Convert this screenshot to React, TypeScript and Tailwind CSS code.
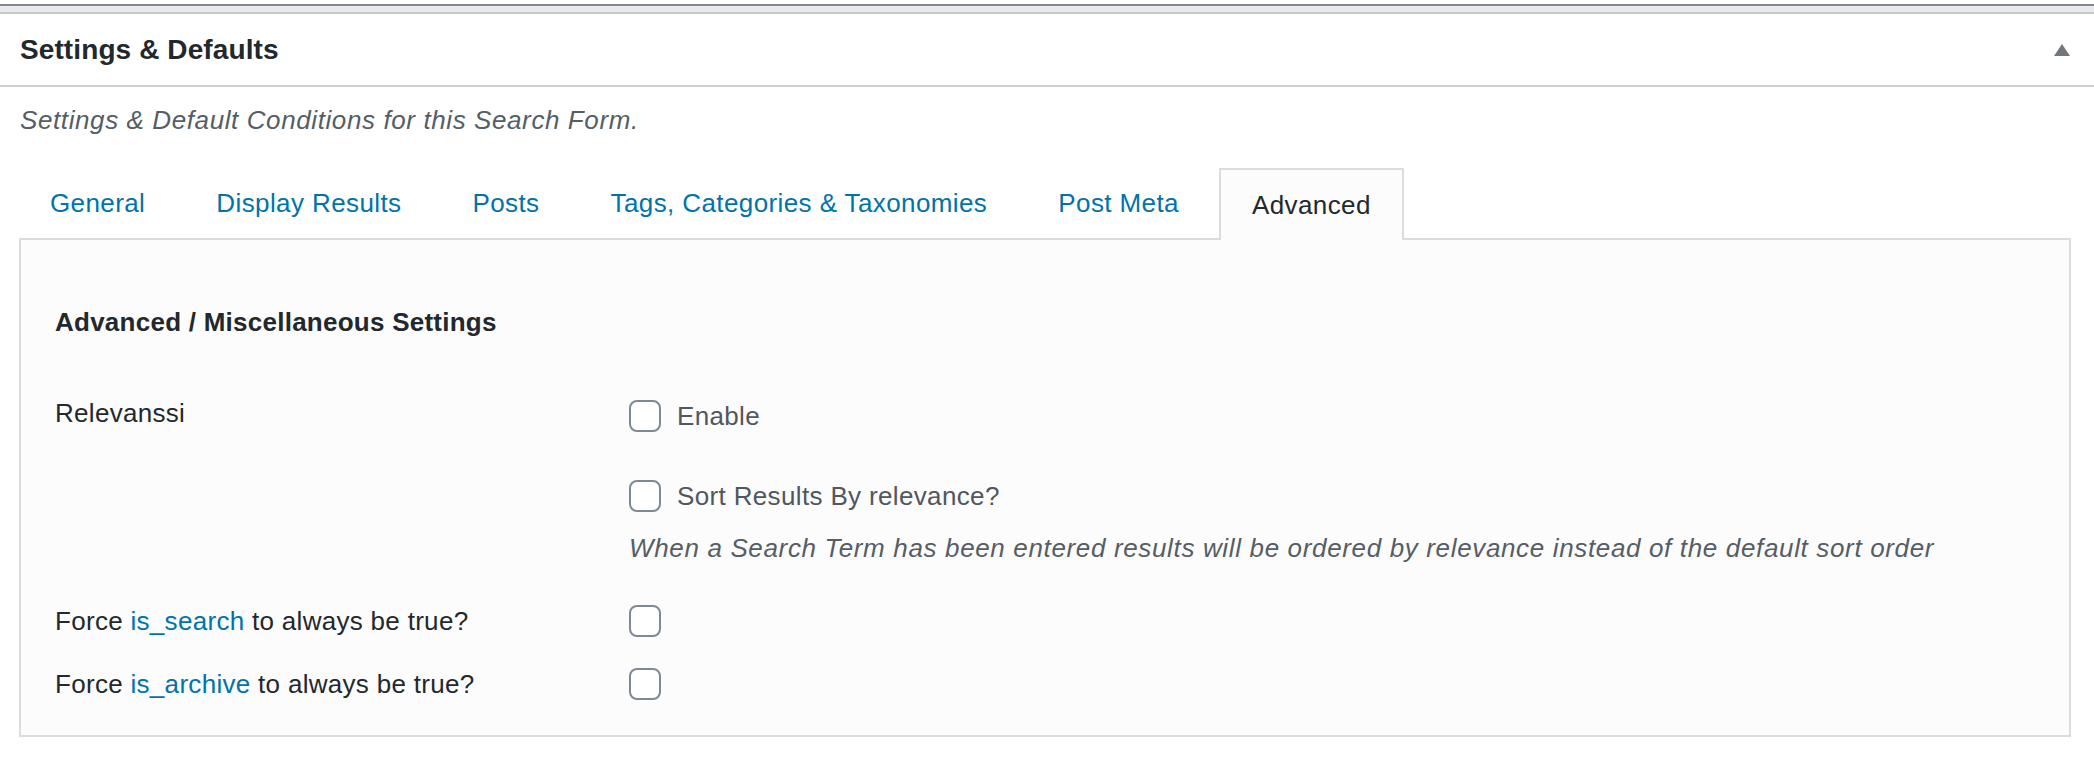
import React from 'react';

const tabs = [
  'General',
  'Display Results',
  'Posts',
  'Tags, Categories & Taxonomies',
  'Post Meta',
  'Advanced',
];

const Checkbox = () => (
  <span className="inline-block h-[32px] w-[32px] shrink-0 rounded-[8px] border-2 border-[#7e8993] bg-white" />
);

const App = () => {
  const active = 'Advanced';

  return (
    <div className="w-[2094px] bg-white font-['Liberation_Sans',Arial,sans-serif] text-[#23282d]">
      {/* bottom edge of the previous box */}
      <div className="h-[4px]" />
      <div className="h-[2px] bg-[#7f8790]" />
      <div className="h-[6px] bg-[#e9eaeb]" />
      <div className="h-[2px] bg-[#c3c7cb]" />

      {/* postbox header */}
      <div className="flex h-[73px] items-center justify-between border-b-2 border-[#ccd0d4] pl-[20px] pr-[24px]">
        <h2 className="text-[28px] leading-[36px] font-bold tracking-[0.1px] text-[#23282d]">
          Settings &amp; Defaults
        </h2>
        <svg width="16" height="12" viewBox="0 0 16 12">
          <polygon points="8,0 16,12 0,12" fill="#72777c" />
        </svg>
      </div>

      <p className="mt-[15px] pl-[20px] text-[26px] leading-[36px] italic tracking-[0.6px] text-[#555d66]">
        Settings &amp; Default Conditions for this Search Form.
      </p>

      {/* tabs */}
      <div className="mt-[30px] flex items-end gap-[9px] pl-[19px]">
        {tabs.map((t) =>
          t === active ? (
            <div
              key={t}
              className="relative z-10 -mb-[2px] flex h-[72px] items-center border-2 border-b-0 border-[#dcdcde] bg-[#fcfcfc] px-[31px] text-[26px] tracking-[0.4px] text-[#23282d]"
            >
              {t}
            </div>
          ) : (
            <div
              key={t}
              className="flex h-[70px] items-center px-[31px] text-[26px] tracking-[0.4px] text-[#0073aa]"
            >
              {t}
            </div>
          )
        )}
      </div>

      {/* tab panel */}
      <div className="ml-[19px] w-[2052px] border-2 border-[#dcdcde] bg-[#fcfcfc] pb-[33px] pl-[34px] pt-[64px] tracking-[0.3px]">
        <h3 className="text-[26px] leading-[36px] font-bold tracking-[0.25px] text-[#23282d]">
          Advanced / Miscellaneous Settings
        </h3>

        <div className="mt-[55px] flex items-start">
          <div className="w-[574px] text-[26px] leading-[36px]">Relevanssi</div>
          <div className="flex flex-col pt-[3px]">
            <label className="flex h-[36px] items-center gap-[16px] text-[26px] tracking-[0.35px] text-[#50575e]">
              <Checkbox />
              Enable
            </label>
            <label className="mt-[44px] flex h-[36px] items-center gap-[16px] text-[26px] tracking-[0.35px] text-[#50575e]">
              <Checkbox />
              Sort Results By relevance?
            </label>
            <p className="mt-[16px] text-[26px] leading-[36px] italic tracking-[0.65px] text-[#555d66]">
              When a Search Term has been entered results will be ordered by relevance instead of the default sort order
            </p>
          </div>
        </div>

        <div className="mt-[37px] flex h-[36px] items-center">
          <div className="w-[574px] text-[26px]">
            Force <span className="text-[#0073aa]">is_search</span> to always be true?
          </div>
          <Checkbox />
        </div>

        <div className="mt-[27px] flex h-[36px] items-center">
          <div className="w-[574px] text-[26px]">
            Force <span className="text-[#0073aa]">is_archive</span> to always be true?
          </div>
          <Checkbox />
        </div>
      </div>
    </div>
  );
};

export default App;
